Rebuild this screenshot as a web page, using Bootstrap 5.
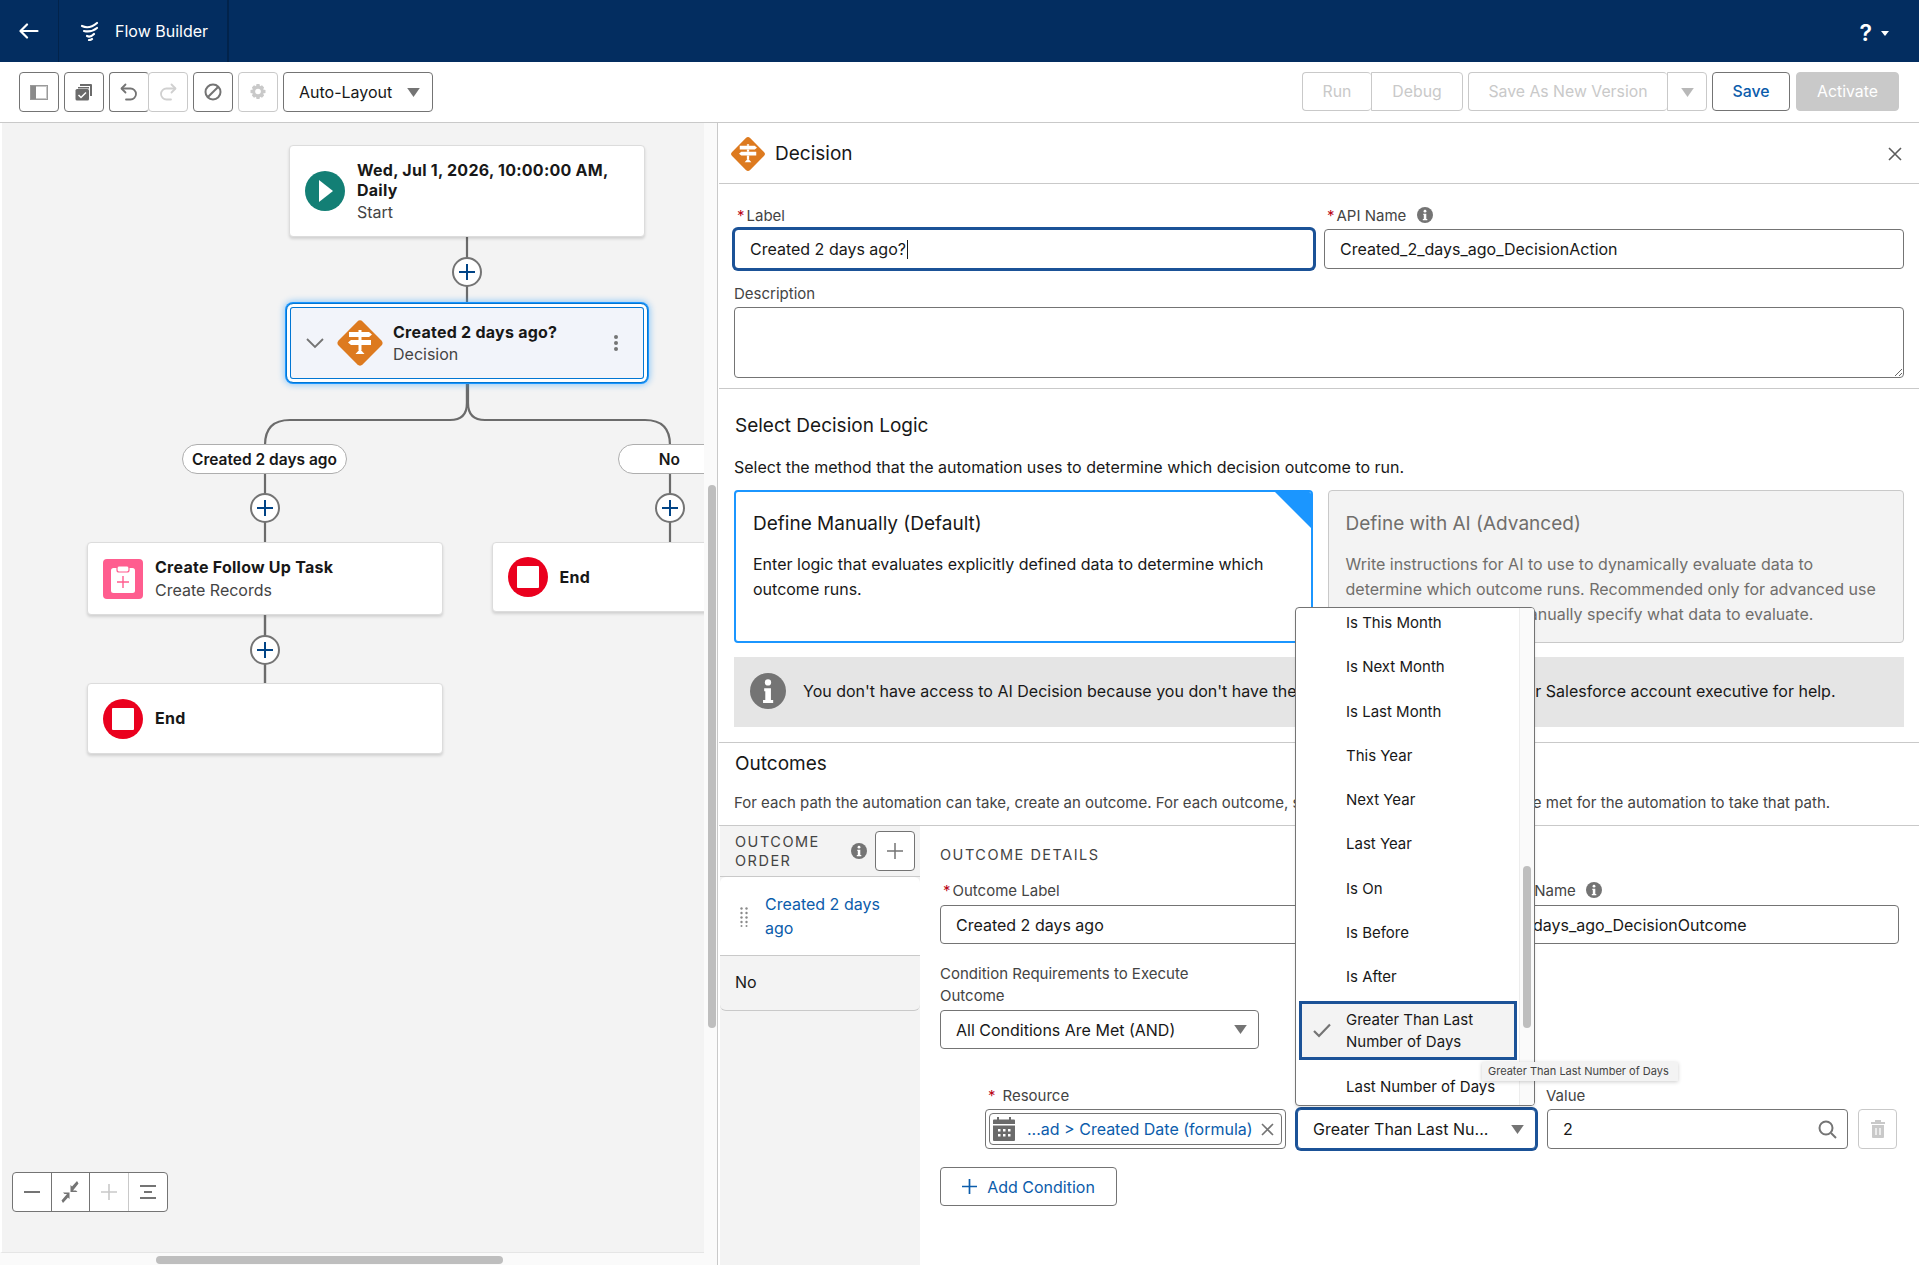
<!DOCTYPE html>
<html lang="en">
<head>
<meta charset="utf-8">
<title>Flow Builder</title>
<link rel="stylesheet" href="https://cdn.jsdelivr.net/npm/bootstrap@5.3.0/dist/css/bootstrap.min.css">
<style>
body{font-family:Inter,"Liberation Sans",sans-serif;font-size:16px;color:#181818;background:#fff;--caret:url("data:image/svg+xml,%3Csvg xmlns='http://www.w3.org/2000/svg' viewBox='0 0 14 10'%3E%3Cpath d='M0 0h14L7 10z' fill='%23747474'/%3E%3C/svg%3E")}
.topbar{height:62px;background:#032d60;padding:0;flex:none;color:#fff}
.tb-back{width:59px;height:62px;border-right:1px solid #02234b}
.tb-app{width:170px;height:62px;border-right:2px solid #02234b;padding-left:21px;gap:15px;font-size:16px}
.tb-help{margin-right:30px;font-size:23px;font-weight:600;gap:9px;margin-top:4px}
.tb-caret{width:0;height:0;border:4px solid transparent;border-top:5px solid #fff;border-bottom:0}
.toolbar{height:61px;flex:none;border-bottom:1px solid #c9c9c9;padding:10px 20px 0 19px;background:#fff}
.tool-btn{height:40px;width:40px;padding:0;border:1px solid #747474;border-radius:4px;background:#fff;display:flex;align-items:center;justify-content:center;color:#706e6b}
.tool-btn.off{border-color:#c9c9c9}
.tool-btn.lay{width:150px;justify-content:space-between;padding:0 12px 0 15px;color:#181818;font-size:16px}
.btn-group>.tool-btn:first-child{border-right-color:#c9c9c9}
.act-btn{height:39px;padding:1px 0 0;border:1px solid #c9c9c9;border-radius:4px;background:#fff;color:#c9c9c9;font-size:15.8px;display:flex;align-items:center;justify-content:center}
.w-run{width:69px}.w-debug{width:92px}.w-saveas{width:199px}.w-split{width:40px}
.w-save{width:78px;border-color:#747474;color:#0b5cab;font-weight:500}
.w-activate{width:103px;background:#c9c9c9;color:#fff}
.act-caret{width:13px;height:9px;background:var(--caret) center/contain no-repeat;opacity:.5}
.stage-wrap{width:718px;flex:none;background:#fafafa;border-right:1px solid #c9c9c9;position:relative}
.stage{position:absolute;left:0;top:0;width:704px;height:1130px;background:#f3f3f3;overflow:hidden;border-left:2px solid #fff;border-bottom:1px solid #e5e5e5}
.links{position:absolute;left:-2px;top:0}
.node{position:absolute;background:#fff;border:1px solid #dcdcdc;border-radius:4px;box-shadow:0 2px 3px rgba(0,0,0,.14);flex-direction:row;align-items:center}
.n-start{left:287px;top:22px;width:356px;height:92px}
.n-dec{left:284px;top:180px;width:362px;height:80px;background:#f2f4fa;border:1px solid #0176d3;box-shadow:0 0 0 1px #1b96ff,0 0 6px 2px rgba(27,150,255,.45),inset 0 0 0 3px #fff,inset 0 0 0 4px #0176d3;border-radius:7px}
.n-task{left:85px;top:419px;width:356px;height:73px}
.n-end1{left:85px;top:560px;width:356px;height:71px}
.n-end2{left:489.5px;top:419px;width:300px;height:70px}
.n-icon{position:absolute;left:15px;top:50%;transform:translateY(-50%)}
.n-text{position:absolute;left:67px;line-height:20px;font-size:16px;white-space:nowrap}
.n-text b{font-weight:700;display:block;letter-spacing:.25px}
.n-text span{color:#444;display:block}
.pill-lab{position:absolute;height:30px;padding-top:1px;border:1px solid #aeaeae;border-radius:15px;background:#fff;font-weight:600;font-size:15.5px;display:flex;align-items:center;justify-content:center}
.plus-dot{position:absolute;width:30px;height:30px;border-radius:50%;background:#fff;border:2px solid #747474;display:flex;align-items:center;justify-content:center}
.zoom-bar{position:absolute;left:10px;top:1049px;height:40px;width:156px;border:1px solid #747474;border-radius:4px;background:#fff;display:flex;overflow:hidden}
.zoom-bar div{width:38.5px;display:flex;align-items:center;justify-content:center;border-right:1px solid #747474}
.zoom-bar div:last-child{border:0}
.vthumb{position:absolute;left:708px;top:362px;width:8px;height:543px;background:#bebebe;border-radius:4px}
.hthumb{position:absolute;left:156px;top:1133px;width:347px;height:8px;background:#bebebe;border-radius:4px}
.panel{flex:1;position:relative;overflow:hidden;min-width:0;padding-left:1px}
.p-head{height:61px;border-bottom:1px solid #c9c9c9;padding:2px 17px 0 11px;gap:9px;font-size:19px}
.p-form{padding:23px 15px 10px 15px;border-bottom:1px solid #c9c9c9;height:205px}
.fld-label{font-size:15px;line-height:18px;color:#444;margin-bottom:4px;white-space:nowrap}
.req{color:#ba0517;margin:0 2px 0 3px}
.inp{height:40px;border:1px solid #747474;border-radius:4px;font-size:16px;padding:0 15px;display:flex;align-items:center;color:#181818;box-shadow:none;white-space:nowrap}
.inp.foc{border-color:#1b5297;box-shadow:0 0 0 2px #1b5297}
.caret-line{display:inline-block;width:1px;height:19px;background:#181818;margin-left:1px}
.ta{height:71px;resize:vertical;display:block;min-height:71px}
.inp-row{gap:10px}
.info-dot{display:inline-flex;width:16px;height:16px;vertical-align:-2px;margin-left:6px}
.p-logic{padding:26px 15px 15px 15px;border-bottom:1px solid #c9c9c9;height:354px}
.sect-h{font-size:19px;line-height:22px;margin:0;font-weight:400}
.sect-t{line-height:20px;font-size:16px;white-space:nowrap}
.opts{gap:15px;margin-top:13px}
.opt{height:153px;flex:1;padding:21px 18px 0 17px;border-radius:4px;position:relative;overflow:hidden}
.opt h5{font-size:19px;line-height:24px;font-weight:400;margin:0 0 16px}
.opt p{font-size:16px;line-height:25px;margin:0}
.opt-on{border:2px solid #1b96ff;background:#fff;padding-top:20px}
.opt-off{border:1px solid #c9c9c9;background:#f3f3f3;color:#706e6b}
.opt-corner{position:absolute;right:0;top:0;width:0;height:0;border-top:36px solid #1b96ff;border-left:36px solid transparent}
.note{height:70px;margin-top:14px;background:#e5e5e5;padding:0 0 2px 16px;gap:17px;white-space:nowrap;border-radius:0}
.p-out{padding:10px 15px 12px 15px;border-bottom:1px solid #c9c9c9;height:83px}
.p-tabs{height:440px}
.tabs-col{width:200px;flex:none;background:#f3f3f3;margin-left:1px}
.tabs-head{height:51px;border-bottom:1px solid #c9c9c9;padding:0 5px 0 15px;position:relative}
.cap{text-transform:uppercase;letter-spacing:1.5px;color:#444;font-size:14.5px;line-height:19px}
.tab-item{border:0;border-bottom:1px solid #c9c9c9;border-radius:0;background:transparent;color:#181818;padding:0;font-size:16px}
.t-a{height:79px;background:#fff;color:#0b5cab;padding-left:45px;line-height:24px;display:flex;align-items:center;position:relative}
.t-b{height:55px;padding:0 0 2px 15px;display:flex;align-items:center}
.grip{position:absolute;left:20px;top:30px}
.sq-btn{width:40px;height:40px;border:1px solid #747474;border-radius:4px;background:#fff;padding:0;display:flex;align-items:center;justify-content:center}
.dets{flex:1;padding:19px 20px 0 20px;min-width:0}
.d-cap{line-height:20px}
.c-sel{width:319px;margin-top:3px;height:39px}
.form-select.inp{background-image:var(--caret);background-size:13px 9px;background-position:right 11px center;padding-right:30px}
.cond{margin-top:4px;margin-left:45px}
.c1{width:301px;padding:3px;}
.c1-in{flex:1;height:32px;border:1px solid #747474;border-radius:4px;padding:0 7px 0 3px;color:#0b5cab;font-size:16px;justify-content:space-between}
.c2{width:239px;margin:0 11px}
.c3{width:301px;margin-right:10px;justify-content:space-between;padding-right:10px}
.c4{width:39px;border-color:#c9c9c9}
.add-btn{width:177px;height:39px;border:1px solid #747474;border-radius:4px;background:#fff;color:#0b5cab;margin-top:18px;gap:10px;font-size:16px;padding:0;display:flex;align-items:center;justify-content:center}
.lab-row{margin:38px 0 0 45px;height:18px}
.lab-1{width:301px}
.lab-2{margin-left:260px}
.drop{position:absolute;display:block;left:577px;top:484px;width:240px;height:499px;min-width:0;padding:0;border:1px solid #747474;border-radius:4px;overflow:hidden;background:#fff;font-size:15px;margin:0;box-shadow:0 2px 3px rgba(0,0,0,.1);z-index:5}
.drop-list{margin-top:-7px;width:224px}
.drop-item{height:44.25px;padding:0 0 0 50px;display:flex;align-items:center;color:#181818;white-space:normal;line-height:22px}
.drop-item.sel{height:59px;margin:2px 0 5px 3px;width:218px;padding-left:44px;background:#f3f3f3;border:3px solid #1b5297;position:relative}
.sel-check{position:absolute;left:11px;top:19px}
.drop-track{position:absolute;right:0;top:0;bottom:0;width:15px;background:#fafafa;border-left:1px solid #ededed}
.drop-thumb{position:absolute;right:3px;top:258px;width:8px;height:162px;background:#bebebe;border-radius:4px}
.tip-box{position:absolute;left:764px;top:939px;width:196px;height:19px;background:#f3f3f3;font-size:11px;color:#444;display:flex;align-items:center;padding-left:6px;box-shadow:0 1px 4px rgba(0,0,0,.2);white-space:nowrap;z-index:6}
</style>
</head>
<body class="d-flex flex-column vh-100 overflow-hidden">

<nav class="navbar topbar flex-nowrap justify-content-between">
  <div class="d-flex align-items-center">
    <div class="tb-back d-flex align-items-center justify-content-center">
      <svg width="20" height="16" viewBox="0 0 20 16" fill="none" stroke="#fff" stroke-width="2.2" stroke-linecap="round" stroke-linejoin="round"><path d="M18.5 8H2M8 1.5 1.500 8 8 14.500"/></svg>
    </div>
    <div class="tb-app d-flex align-items-center">
      <svg width="20" height="20" viewBox="0 0 20 20" fill="none" stroke="#fff" stroke-width="2.2" stroke-linecap="round"><path d="M2 5c4 2 9 2 15-3M4 10c4 1 8 1 13-3M7 15c2 1 5 0 7-2"/><path d="M9 19c1 0 2 0 3-1"/></svg>
      <span>Flow Builder</span>
    </div>
  </div>
  <div class="tb-help d-flex align-items-center"><span>?</span><span class="tb-caret"></span></div>
</nav>

<div class="toolbar d-flex justify-content-between">
  <div class="d-flex">
    <button class="tool-btn" aria-label="Toggle panel"><svg width="18" height="15" viewBox="0 0 18 15"><rect x="0.5" y="0.5" width="17" height="14" fill="#c9c9c9" stroke="#9a9a9a"/><rect x="6" y="2" width="10" height="11" fill="#fff"/><rect x="1" y="1" width="5" height="13" fill="#8a8a8a"/></svg></button>
    <button class="tool-btn" style="margin-left:5px" aria-label="Copy"><svg width="18" height="18" viewBox="0 0 18 18"><path d="M5 1h11a1 1 0 0 1 1 1v11h-2V3H5z" fill="#6b6b6b"/><path d="M3 4h11v1.5H3z" fill="#6b6b6b"/><rect x="0.5" y="6" width="13.5" height="11.5" rx="1.5" fill="#6b6b6b"/><path d="m3.5 12 2.5 2.5 5-5" fill="none" stroke="#fff" stroke-width="1.5"/></svg></button>
    <div class="btn-group" style="margin-left:5px">
      <button class="tool-btn" aria-label="Undo"><svg width="18" height="18" viewBox="0 0 18 18" fill="none" stroke="#747474" stroke-width="1.8" stroke-linecap="round" stroke-linejoin="round"><path d="M5.5 1.5 1.5 5.5l4 4"/><path d="M2 5.5h8.5a5.500 5.500 0 0 1 0 11H6"/></svg></button>
      <button class="tool-btn off" style="margin-left:-1px" aria-label="Redo"><svg width="18" height="18" viewBox="0 0 18 18" fill="none" stroke="#d0d0d0" stroke-width="1.8" stroke-linecap="round" stroke-linejoin="round"><path d="m12.5 1.5 4 4-4 4"/><path d="M16 5.5H7.5a5.500 5.500 0 0 0 0 11H12"/></svg></button>
    </div>
    <button class="tool-btn" style="margin-left:5px" aria-label="Deactivate"><svg width="18" height="18" viewBox="0 0 18 18" fill="none" stroke="#747474" stroke-width="2"><circle cx="9" cy="9" r="7.5"/><path d="m3.7 14.3 10.6-10.6"/></svg></button>
    <button class="tool-btn off" style="margin-left:5px" aria-label="Settings"><svg width="18" height="18" viewBox="0 0 18 18"><path d="M7.5 1h3l.5 2.2 2-.9 2.100 2.100-1 2 2.400.6v3l-2.400.6 1 2-2.100 2.100-2-1-.5 2.300h-3L7 13.700l-2 1L2.900 12.600l1-2L1.500 10V7l2.400-.6-1-2L5 2.300l2 .9z" fill="#c9c9c9"/><circle cx="9" cy="8.5" r="2.8" fill="#fff"/></svg></button>
    <button class="tool-btn lay" style="margin-left:5px"><span>Auto-Layout</span><span class="act-caret" style="opacity:1"></span></button>
  </div>
  <div class="d-flex">
    <div class="btn-group">
      <button class="act-btn w-run" style="border-right:0">Run</button>
      <button class="act-btn w-debug" style="border-radius:0 4px 4px 0">Debug</button>
    </div>
    <div class="btn-group" style="margin-left:5px">
      <button class="act-btn w-saveas" style="border-right:0">Save As New Version</button>
      <button class="act-btn w-split" style="border-radius:0 4px 4px 0"><span class="act-caret"></span></button>
    </div>
    <button class="act-btn w-save" style="margin-left:5px">Save</button>
    <button class="act-btn w-activate" style="margin-left:6px">Activate</button>
  </div>
</div>

<div class="d-flex flex-grow-1" style="min-height:0">
  <div class="stage-wrap">
    <div class="stage">
      <svg class="links" width="704" height="700" fill="none" stroke="#6b6b6b" stroke-width="2.2">
        <path d="M467 114V180M467 260V285"/>
        <path d="M467 260V280Q467 297 450 297H290Q265 297 265 322V560"/>
        <path d="M468 260V280Q468 297 485 297H645Q670 297 670 322V419"/>
      </svg>
      <div class="plus-dot" style="left:450px;top:134px"><svg width="20" height="20" viewBox="0 0 20 20" stroke="#014486" stroke-width="2"><path d="M10 2v16M2 10h16"/></svg></div>
      <div class="card node n-start">
        <svg class="n-icon" width="40" height="40" viewBox="0 0 40 40"><circle cx="20" cy="20" r="20" fill="#137f75"/><path d="M14 9v22l14-11z" fill="#fff"/></svg>
        <div class="n-text" style="top:14px"><b>Wed, Jul 1, 2026, 10:00:00 AM,<br>Daily</b><span style="margin-top:2px">Start</span></div>
      </div>
      <div class="card node n-dec">
        <svg class="n-icon" style="left:19px" width="18" height="12" viewBox="0 0 18 12" fill="none" stroke="#747474" stroke-width="1.8"><path d="m1 2 8 8 8-8"/></svg>
        <svg class="n-icon" style="left:49px" width="48" height="48" viewBox="0 0 48 48"><use href="#decIcon"/></svg>
        <div class="n-text" style="left:106px;top:18px"><b>Created 2 days ago?</b><span style="margin-top:2px">Decision</span></div>
        <svg class="n-icon" style="left:326px" width="6" height="18" viewBox="0 0 6 18" fill="#747474"><circle cx="3" cy="3" r="2"/><circle cx="3" cy="9" r="2"/><circle cx="3" cy="15" r="2"/></svg>
      </div>
      <div class="pill-lab" style="left:180px;top:321px;width:165px">Created 2 days ago</div>
      <div class="pill-lab" style="left:616px;top:321px;width:180px;padding-right:117px;justify-content:flex-end">No</div>
      <div class="plus-dot" style="left:248px;top:370px"><svg width="20" height="20" viewBox="0 0 20 20" stroke="#014486" stroke-width="2"><path d="M10 2v16M2 10h16"/></svg></div>
      <div class="plus-dot" style="left:653px;top:370px"><svg width="20" height="20" viewBox="0 0 20 20" stroke="#014486" stroke-width="2"><path d="M10 2v16M2 10h16"/></svg></div>
      <div class="card node n-task">
        <svg class="n-icon" width="40" height="40" viewBox="0 0 40 40"><rect width="40" height="40" rx="4" fill="#ff5d8f"/><rect x="8" y="9" width="24" height="25" rx="2.5" fill="#fff"/><rect x="14" y="7" width="12" height="6" rx="2" fill="#fff" stroke="#ff5d8f" stroke-width="1.2"/><path d="M20 17v12M14 23h12" stroke="#ff5d8f" stroke-width="1.4"/></svg>
        <div class="n-text" style="top:14px"><b>Create Follow Up Task</b><span style="margin-top:3px">Create Records</span></div>
      </div>
      <div class="plus-dot" style="left:248px;top:512px"><svg width="20" height="20" viewBox="0 0 20 20" stroke="#014486" stroke-width="2"><path d="M10 2v16M2 10h16"/></svg></div>
      <svg class="links" width="704" height="700" fill="none" stroke="#6b6b6b" stroke-width="2.2"><path d="M265 492V512M265 542V560"/></svg>
      <div class="card node n-end1">
        <svg class="n-icon" width="40" height="40" viewBox="0 0 40 40"><circle cx="20" cy="20" r="20" fill="#ea001e"/><rect x="9" y="9" width="22" height="22" rx="1" fill="#fff"/></svg>
        <div class="n-text" style="top:24px"><b>End</b></div>
      </div>
      <div class="card node n-end2">
        <svg class="n-icon" width="40" height="40" viewBox="0 0 40 40"><circle cx="20" cy="20" r="20" fill="#ea001e"/><rect x="9" y="9" width="22" height="22" rx="1" fill="#fff"/></svg>
        <div class="n-text" style="top:24px"><b>End</b></div>
      </div>
      <div class="zoom-bar">
        <div><svg width="18" height="18" viewBox="0 0 18 18" stroke="#747474" stroke-width="2"><path d="M1 9h16"/></svg></div>
        <div><svg width="18" height="24" viewBox="0 0 18 24" fill="#747474"><path d="M16 1 11 6.5 9.5 5v7h7L15 10.5l-3-.1 5.500-7z"/><path d="M2 23l5-5.500 1.500 1.500v-6.500H2L3.500 14 6 14 .5 20.500z"/></svg></div>
        <div style="border-right-color:#c9c9c9"><svg width="18" height="18" viewBox="0 0 18 18" stroke="#c9c9c9" stroke-width="1.6"><path d="M9 1v16M1 9h16"/></svg></div>
        <div><svg width="18" height="18" viewBox="0 0 18 18" stroke="#747474" stroke-width="2"><path d="M1 3h16M5 9h8M1 15h16"/></svg></div>
      </div>
    </div>
    <div class="vthumb"></div>
    <div class="hthumb"></div>
  </div>

  <main class="panel">
    <div class="p-head d-flex align-items-center">
      <svg width="36" height="36" viewBox="0 0 48 48"><use href="#decIcon"/></svg>
      <span class="flex-grow-1">Decision</span>
      <svg width="14" height="14" viewBox="0 0 14 14" stroke="#5c5c5c" stroke-width="1.6"><path d="m1 1 12 12M13 1 1 13"/></svg>
    </div>

    <section class="p-form">
      <div class="d-flex inp-row">
        <div class="flex-fill w-50">
          <div class="fld-label"><span class="req">*</span>Label</div>
          <div class="form-control inp foc">Created 2 days ago?<span class="caret-line"></span></div>
        </div>
        <div class="flex-fill w-50">
          <div class="fld-label"><span class="req">*</span>API Name <span class="info-dot"><svg width="16" height="16" viewBox="0 0 16 16"><use href="#infoIcon"/></svg></span></div>
          <div class="form-control inp">Created_2_days_ago_DecisionAction</div>
        </div>
      </div>
      <div class="fld-label mt-3">Description</div>
      <textarea class="form-control inp ta" aria-label="Description"></textarea>
    </section>

    <section class="p-logic">
      <h2 class="sect-h" style="padding-left:1px">Select Decision Logic</h2>
      <div class="sect-t" style="margin-top:20px">Select the method that the automation uses to determine which decision outcome to run.</div>
      <div class="d-flex opts">
        <div class="opt opt-on"><span class="opt-corner"></span><h5>Define Manually (Default)</h5><p>Enter logic that evaluates explicitly defined data to determine which outcome runs.</p></div>
        <div class="opt opt-off"><h5>Define with AI (Advanced)</h5><p>Write instructions for AI to use to dynamically evaluate data to determine which outcome runs. Recommended only for advanced use cases when you can't manually specify what data to evaluate.</p></div>
      </div>
      <div class="alert note d-flex align-items-center border-0 mb-0">
        <svg width="36" height="36" viewBox="0 0 16 16" class="flex-shrink-0"><use href="#infoIcon"/></svg>
        <span>You don't have access to AI Decision because you don't have the required <span class="me-1">licenses.</span> Contact your Salesforce account executive for help.</span>
      </div>
    </section>

    <section class="p-out">
      <h2 class="sect-h" style="padding-left:1px">Outcomes</h2>
      <div class="sect-t" style="margin-top:18px;font-size:15px;color:#444">For each path the automation can take, create an outcome. For each outcome, specify the conditions that must be met for the automation to take that path.</div>
    </section>

    <section class="d-flex p-tabs">
      <div class="tabs-col">
        <div class="tabs-head d-flex align-items-center justify-content-between">
          <div class="cap">Outcome<br>Order</div>
          <div class="d-flex align-items-center gap-2">
            <svg width="16" height="16" viewBox="0 0 16 16"><use href="#infoIcon"/></svg>
            <button class="sq-btn" aria-label="Add outcome"><svg width="16" height="16" viewBox="0 0 16 16" stroke="#747474" stroke-width="1.5"><path d="M8 0v16M0 8h16"/></svg></button>
          </div>
        </div>
        <div class="list-group">
          <div class="list-group-item tab-item t-a"><svg class="grip" width="8" height="20" viewBox="0 0 8 20" fill="#8a8a8a"><circle cx="1.5" cy="1.5" r="1.2"/><circle cx="6.5" cy="1.5" r="1.2"/><circle cx="1.5" cy="6" r="1.2"/><circle cx="6.5" cy="6" r="1.2"/><circle cx="1.5" cy="10.5" r="1.2"/><circle cx="6.5" cy="10.5" r="1.2"/><circle cx="1.5" cy="15" r="1.2"/><circle cx="6.5" cy="15" r="1.2"/><circle cx="1.5" cy="19" r="1"/><circle cx="6.5" cy="19" r="1"/></svg><span>Created 2 days<br>ago</span></div>
          <div class="list-group-item tab-item t-b">No</div>
        </div>
      </div>
      <div class="dets">
        <div class="cap d-cap">Outcome Details</div>
        <div class="d-flex inp-row" style="margin-top:17px">
          <div class="w-50">
            <div class="fld-label" style="margin-bottom:5px"><span class="req">*</span>Outcome Label</div>
            <div class="form-control inp" style="height:39px">Created 2 days ago</div>
          </div>
          <div class="w-50" style="margin-left:16px">
            <div class="fld-label" style="padding-left:61px;margin-bottom:5px"><span class="req">*</span>API Name <span class="info-dot"><svg width="16" height="16" viewBox="0 0 16 16"><use href="#infoIcon"/></svg></span></div>
            <div class="form-control inp" style="height:39px">Created_2_days_ago_DecisionOutcome</div>
          </div>
        </div>
        <div class="fld-label" style="margin:19px 0 0;line-height:22px">Condition Requirements to Execute<br>Outcome</div>
        <div class="form-select inp c-sel">All Conditions Are Met (AND)</div>
        <div class="fld-label d-flex lab-row"><div class="lab-1"><span class="req" style="margin-right:7px">*</span>Resource</div><div class="lab-2">Value</div></div>
        <div class="d-flex cond">
          <div class="form-control inp c1"><div class="c1-in d-flex align-items-center w-100">
            <svg width="22" height="24" viewBox="0 0 22 24" fill="#6b6b6b"><path d="M4 0h2v3H4zM16 0h2v3h-2z"/><path d="M1 2.5h20a1 1 0 0 1 1 1V7H0V3.5a1 1 0 0 1 1-1zM0 8.5h22V23a1 1 0 0 1-1 1H1a1 1 0 0 1-1-1z"/><g fill="#fff"><rect x="5" y="12" width="2.5" height="2.5"/><rect x="10" y="12" width="2.5" height="2.5"/><rect x="15" y="12" width="2.5" height="2.5"/><rect x="5" y="17" width="2.5" height="2.5"/><rect x="10" y="17" width="2.5" height="2.5"/><rect x="15" y="17" width="2.5" height="2.5"/></g></svg>
            <span class="flex-grow-1" style="margin-left:12px;white-space:nowrap">...ad &gt; Created Date (formula)</span>
            <svg width="13" height="13" viewBox="0 0 13 13" stroke="#747474" stroke-width="1.6"><path d="m1 1 11 11M12 1 1 12"/></svg>
          </div></div>
          <div class="form-select inp foc c2">Greater Than Last Nu...</div>
          <div class="form-control inp c3"><span>2</span><svg width="19" height="19" viewBox="0 0 19 19" fill="none" stroke="#747474" stroke-width="2"><circle cx="8" cy="8" r="6.5"/><path d="m13 13 5 5"/></svg></div>
          <button class="sq-btn c4" aria-label="Delete"><svg width="14" height="18" viewBox="0 0 14 18" fill="#c9c9c9"><path d="M4 0h6v2h4v2H0V2h4z"/><path d="M1 5h12v12a1 1 0 0 1-1 1H2a1 1 0 0 1-1-1z"/><path d="M5 8v7M9 8v7" stroke="#fff" stroke-width="1.3"/></svg></button>
        </div>
        <button class="add-btn"><svg width="15" height="15" viewBox="0 0 15 15" stroke="#0b5cab" stroke-width="1.7"><path d="M7.5 0v15M0 7.5h15"/></svg>Add Condition</button>
      </div>
    </section>

    <div class="dropdown-menu drop">
      <div class="drop-list">
        <div class="drop-item">Is This Month</div>
        <div class="drop-item">Is Next Month</div>
        <div class="drop-item">Is Last Month</div>
        <div class="drop-item">This Year</div>
        <div class="drop-item">Next Year</div>
        <div class="drop-item">Last Year</div>
        <div class="drop-item">Is On</div>
        <div class="drop-item">Is Before</div>
        <div class="drop-item">Is After</div>
        <div class="drop-item sel"><svg class="sel-check" width="18" height="15" viewBox="0 0 18 15" fill="none" stroke="#747474" stroke-width="2.2"><path d="m1 8 5 5L17 1.5"/></svg>Greater Than Last Number of Days</div>
        <div class="drop-item">Last Number of Days</div>
      </div>
      <div class="drop-track"></div>
      <div class="drop-thumb"></div>
    </div>
    <div class="tip-box">Greater Than Last Number of Days</div>
  </main>
</div>

<svg width="0" height="0" class="position-absolute">
  <defs>
    <g id="decIcon">
      <rect x="7" y="7" width="34" height="34" rx="4" transform="rotate(45 24 24)" fill="#dd7a1f"/>
      <path d="M22.5 11h3v2h-3zM22.5 18h3v3h-3zM22.5 26h3v5h-3z" fill="#fff"/>
      <path d="M13 13h20l3 2.5-3 2.5H13zM35 21H15l-3 2.5 3 2.5h20z" fill="#fff"/>
      <path d="M24 30l4.500 5h-9z" fill="#fff"/>
    </g>
    <g id="infoIcon">
      <circle cx="8" cy="8" r="8" fill="#747474"/>
      <circle cx="8" cy="4.2" r="1.4" fill="#fff"/>
      <path d="M6.3 6.8h3v5.2h1v1.3H5.8V12h1V8.100h-.5z" fill="#fff"/>
    </g>
  </defs>
</svg>
<script src="https://cdn.jsdelivr.net/npm/bootstrap@5.3.0/dist/js/bootstrap.bundle.min.js"></script>
</body>
</html>
